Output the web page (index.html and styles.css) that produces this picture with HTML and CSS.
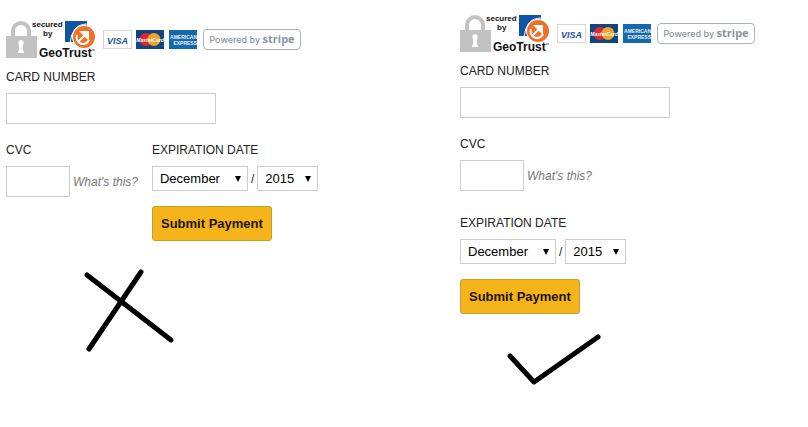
FILE: index.html
```html
<!DOCTYPE html>
<html lang="en">

<head>
    <meta charset="UTF-8">
    <meta name="viewport" content="width=device-width, initial-scale=1.0">

    <title>Payment</title>
    <link rel="stylesheet" href="styles.css">
</head>

<body>

    <div class="compare">
        <form class="payment payment-inline">
            <div class="logos">
                <svg class="geotrust" width="90" height="37" viewBox="0 0 90 37">
                    <path class="shackle" d="M7 15V10a8 8 0 0 1 16 0v5" />
                    <rect class="lock" x="0" y="15" width="31" height="22" />
                    <path class="keyhole" d="M15 19a3 3 0 0 1 2 5v6h1v2h-6v-2h1v-6a3 3 0 0 1 2-5z" />
                    <path class="geo-blue" d="M59 0h22v4h-22zM59 3h22v18h-22z" />
                    <path class="geo-swoosh" d="M82 3q-9 0-13 5t-5 14" />
                    <circle class="geo-gap" cx="78" cy="16" r="12" />
                    <circle class="geo-orange" cx="78" cy="16" r="11" />
                    <path class="geo-arrow" d="M71 14a6 6 0 1 0 12 5M72 21l8-8" />
                    <path class="geo-head" d="M73 10h10v10l-3-3-4-4z" />
                    <text class="geo-small" x="26" y="6">secured</text>
                    <text class="geo-small" x="37" y="15">by</text>
                    <text class="geo-name" x="33" y="36">GeoTrust</text>
                    <path class="geo-tm" d="M86 29h3" />
                </svg>
                <div class="cards">
                    <svg width="29" height="19" viewBox="0 0 29 19">
                        <rect class="visa" x=".5" y=".5" width="28" height="18" />
                        <text class="visa-name" x="14.5" y="13.5">VISA</text>
                    </svg>
                    <svg width="29" height="19" viewBox="0 0 29 19">
                        <rect class="master" width="28" height="19" />
                        <circle class="master-red" cx="10" cy="9.5" r="6.5" />
                        <circle class="master-yellow" cx="18" cy="9.5" r="6.5" />
                        <text class="master-name" x="14" y="11.5">MasterCard</text>
                    </svg>
                    <svg width="28" height="19" viewBox="0 0 28 19">
                        <rect class="amex" width="28" height="19" />
                        <text class="amex-name" x="28" y="9">AMERICAN</text>
                        <text class="amex-name" x="28" y="15">EXPRESS</text>
                    </svg>
                </div>
                <div class="powered">Powered by <b>stripe</b></div>
            </div>

            <div class="field">
                <label for="card1">CARD NUMBER</label>
                <input type="text" id="card1" class="card-number">
            </div>
            <div class="bottom">
                <div class="field">
                    <label for="cvc1">CVC</label>
                    <div class="row">
                        <input type="text" id="cvc1" class="cvc">
                        <a href="#" class="help">What's this?</a>
                    </div>
                </div>
                <div class="expiry">
                    <div class="field">
                        <label for="month1">EXPIRATION DATE</label>
                        <div class="row">
                            <select id="month1" class="month">
                                <option>December</option>
                            </select>
                            <span>/</span>
                            <select class="year" aria-label="Year">
                                <option>2015</option>
                            </select>
                        </div>
                    </div>
                    <button type="submit">Submit Payment</button>
                </div>
            </div>

            <svg class="mark cross" width="93" height="85" viewBox="0 0 93 85">
                <path d="M5 7l84 65M59 4L7 81" />
            </svg>
        </form>

        <form class="payment payment-stacked">
            <div class="logos">
                <svg class="geotrust" width="90" height="37" viewBox="0 0 90 37">
                    <path class="shackle" d="M7 15V10a8 8 0 0 1 16 0v5" />
                    <rect class="lock" x="0" y="15" width="31" height="22" />
                    <path class="keyhole" d="M15 19a3 3 0 0 1 2 5v6h1v2h-6v-2h1v-6a3 3 0 0 1 2-5z" />
                    <path class="geo-blue" d="M59 0h22v4h-22zM59 3h22v18h-22z" />
                    <path class="geo-swoosh" d="M82 3q-9 0-13 5t-5 14" />
                    <circle class="geo-gap" cx="78" cy="16" r="12" />
                    <circle class="geo-orange" cx="78" cy="16" r="11" />
                    <path class="geo-arrow" d="M71 14a6 6 0 1 0 12 5M72 21l8-8" />
                    <path class="geo-head" d="M73 10h10v10l-3-3-4-4z" />
                    <text class="geo-small" x="26" y="6">secured</text>
                    <text class="geo-small" x="37" y="15">by</text>
                    <text class="geo-name" x="33" y="36">GeoTrust</text>
                    <path class="geo-tm" d="M86 29h3" />
                </svg>
                <div class="cards">
                    <svg width="29" height="19" viewBox="0 0 29 19">
                        <rect class="visa" x=".5" y=".5" width="28" height="18" />
                        <text class="visa-name" x="14.5" y="13.5">VISA</text>
                    </svg>
                    <svg width="29" height="19" viewBox="0 0 29 19">
                        <rect class="master" width="28" height="19" />
                        <circle class="master-red" cx="10" cy="9.5" r="6.5" />
                        <circle class="master-yellow" cx="18" cy="9.5" r="6.5" />
                        <text class="master-name" x="14" y="11.5">MasterCard</text>
                    </svg>
                    <svg width="28" height="19" viewBox="0 0 28 19">
                        <rect class="amex" width="28" height="19" />
                        <text class="amex-name" x="28" y="9">AMERICAN</text>
                        <text class="amex-name" x="28" y="15">EXPRESS</text>
                    </svg>
                </div>
                <div class="powered">Powered by <b>stripe</b></div>
            </div>

            <div class="field">
                <label for="card2">CARD NUMBER</label>
                <input type="text" id="card2" class="card-number">
            </div>
            <div class="bottom">
                <div class="field">
                    <label for="cvc2">CVC</label>
                    <div class="row">
                        <input type="text" id="cvc2" class="cvc">
                        <a href="#" class="help">What's this?</a>
                    </div>
                </div>
                <div class="expiry">
                    <div class="field">
                        <label for="month2">EXPIRATION DATE</label>
                        <div class="row">
                            <select id="month2" class="month">
                                <option>December</option>
                            </select>
                            <span>/</span>
                            <select class="year" aria-label="Year">
                                <option>2015</option>
                            </select>
                        </div>
                    </div>
                    <button type="submit">Submit Payment</button>
                </div>
            </div>

            <svg class="mark check" width="96" height="54" viewBox="0 0 96 54">
                <path d="M4 23l24 26L92 4" />
            </svg>
        </form>
    </div>

</body>

</html>
```
FILE: styles.css
```css
body {
    margin: 0;
    background-color: white;
    color: #222;
    font-family: "Liberation Sans", Arial, sans-serif;
    font-size: 12px;
    line-height: 16px;
}

input,
select,
button {
    box-sizing: border-box;
    margin: 0;
    font-family: inherit;
    font-size: 13px;
}

svg {
    display: block;
    overflow: visible;
}

.compare {
    display: grid;
    grid-template-columns: 1fr 348px;
    padding-left: 6px;
}

.payment-inline {
    padding-top: 21px;
}

.payment-stacked {
    padding-top: 15px;
}

/* logos */
.logos {
    display: flex;
    align-items: center;
    gap: 6px;
    margin-bottom: 11px;
}

.cards {
    display: flex;
    gap: 4px;
    margin-left: 1px;
}

.shackle {
    fill: none;
    stroke: #c2c2c2;
    stroke-width: 4;
}

.lock {
    fill: #c2c2c2;
}

.keyhole {
    fill: white;
}

.geo-blue {
    fill: #1055a5;
}

.geo-swoosh {
    fill: none;
    stroke: white;
    stroke-width: 1;
}

.geo-gap,
.geo-head {
    fill: white;
}

.geo-orange {
    fill: #f27024;
}

.geo-arrow {
    fill: none;
    stroke: white;
    stroke-width: 2;
}

.geo-small {
    font-size: 8px;
    font-weight: bold;
    fill: #111;
}

.geo-name {
    font-size: 12px;
    font-weight: bold;
    fill: #111;
}

.geo-tm {
    stroke: #555;
}

.visa {
    fill: white;
    stroke: #d5d5d5;
}

.visa-name {
    font-size: 9px;
    font-weight: bold;
    font-style: italic;
    text-anchor: middle;
    fill: #1c5192;
}

.master {
    fill: #12447f;
}

.master-red {
    fill: #dc2a2e;
}

.master-yellow {
    fill: #f3a52b;
}

.master-name {
    font-size: 5px;
    font-weight: bold;
    font-style: italic;
    text-anchor: middle;
    fill: white;
}

.amex {
    fill: #1668a8;
}

.amex-name {
    font-size: 5px;
    font-weight: bold;
    text-anchor: end;
    fill: #e4f1fa;
}

.powered {
    box-sizing: border-box;
    width: 98px;
    height: 21px;
    border: 1px solid #abb3b8;
    border-radius: 4px;
    color: #8a959b;
    font-family: Inter, sans-serif;
    font-size: 9px;
    font-weight: 500;
    line-height: 18px;
    text-align: center;
    white-space: nowrap;
}

.powered b {
    font-family: "Open Sans", sans-serif;
    font-size: 11px;
}

/* fields */
.field {
    display: flex;
    flex-direction: column;
    align-items: flex-start;
    gap: 8px;
}

.row {
    display: flex;
    align-items: center;
    gap: 3px;
}

.card-number,
.cvc {
    height: 31px;
    padding: 0 8px;
    border: 1px solid #ccc;
}

.card-number {
    width: 210px;
}

.cvc {
    width: 64px;
}

.help {
    color: #777;
    font-style: italic;
    text-decoration: none;
}

select {
    height: 25px;
    padding: 0 7px;
    border: 1px solid #ccc;
    border-radius: 0;
    appearance: none;
    color: black;
    background: white url("data:image/svg+xml,%3Csvg xmlns='http://www.w3.org/2000/svg' width='6' height='6'%3E%3Cpath d='M0 0h6L3 6z'/%3E%3C/svg%3E") no-repeat right 6px center;
}

.month {
    width: 96px;
}

.year {
    width: 61px;
}

button {
    height: 35px;
    margin-top: 15px;
    padding: 0 8px;
    border: 1px solid #c4a02c;
    border-radius: 3px;
    background-color: #f4b41a;
    color: #1f1505;
    font-weight: bold;
    cursor: pointer;
}

.bottom {
    display: flex;
    margin-top: 18px;
}

.payment-inline .bottom {
    gap: 14px;
}

.payment-stacked .bottom {
    flex-direction: column;
    gap: 24px;
}

/* hand drawn marks */
.mark {
    fill: none;
    stroke: black;
    stroke-width: 5;
    stroke-linecap: round;
    stroke-linejoin: round;
}

.cross {
    margin: 27px 0 0 76px;
}

.check {
    margin: 19px 0 0 46px;
}
```
